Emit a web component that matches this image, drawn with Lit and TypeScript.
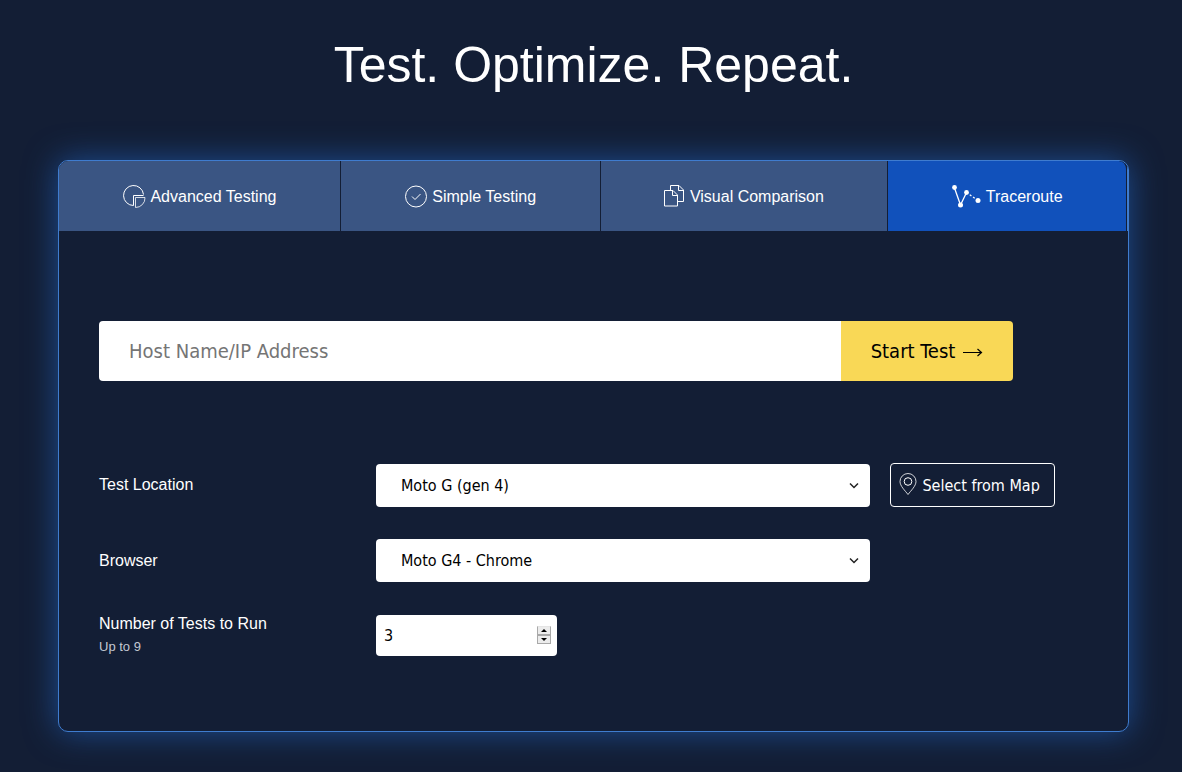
import { LitElement, html, css, svg } from "lit";
import { customElement, state } from "lit/decorators.js";

const icons = {
  advanced: svg`<svg class="icon" width="24" height="24" viewBox="0 0 24 24" aria-hidden="true">
    <path d="M21.5 9.5A10 10 0 1 0 11.5 20.5V10.5H21.5"/>
    <path d="M13.500 12.5H23A9.500 9.500 0 0 1 13.500 22.500Z" opacity=".8"/></svg>`,
  simple: svg`<svg class="icon" width="24" height="24" viewBox="0 0 24 24" aria-hidden="true">
    <circle cx="12" cy="11.500" r="10.5"/><path d="M8 11.500l3 3 5.5-5.5"/></svg>`,
  visual: svg`<svg class="icon" width="22" height="24" viewBox="0 0 22 24" aria-hidden="true">
    <path d="M6.500 5.500V.5H15L19.500 5V16.500H14"/><path d="M14.500 .5V5.500H19.500"/>
    <path d="M.5 5.500H9L13.500 10V21H.5Z"/><path d="M8.500 5.500V10.500H13.500"/></svg>`,
  trace: svg`<svg class="icon" width="30" height="24" viewBox="0 0 30 24" aria-hidden="true">
    <path d="M2.500 3L8.500 20L14.500 7.500" stroke-width="1.300"/><path d="M14.500 7.500L26 15.500" stroke-dasharray="2 2" stroke-width="1.300"/>
    <g fill="#fff" stroke="none"><circle cx="2.500" cy="2.500" r="2.400"/><circle cx="8.500" cy="20" r="2.500"/>
    <circle cx="14.500" cy="7.500" r="2.400"/><circle cx="26" cy="15.500" r="2.500"/></g></svg>`,
};

@customElement("app-root")
export class AppRoot extends LitElement {
  @state() private runs = 3;

  static styles = css`
    :host {
      display: block;
      min-height: 100vh;
      box-sizing: border-box;
      padding: 33px 53px 40px 58px;
      background: #131e35;
      color: #fff;
      font: 16px/20px "Liberation Sans", Arial, sans-serif;
    }
    * { box-sizing: border-box; }
    h1 {
      margin: 0 0 63px;
      font-size: 50px;
      line-height: 64px;
      font-weight: 400;
      text-align: center;
    }
    .card {
      border: 1px solid #3f7ccf;
      border-radius: 10px;
      box-shadow: 0 0 32px rgba(32, 92, 176, 0.75);
      background: #131e35;
      overflow: hidden;
    }
    .tabs { display: flex; border-right: 1px solid #3f7ccf; }
    .tab {
      flex: 1 1 auto;
      display: flex;
      align-items: center;
      justify-content: center;
      gap: 4px;
      height: 70px;
      padding-top: 1px;
      border-right: 1px solid #131e35;
      background: #3a5583;
      color: #fff;
      text-decoration: none;
    }
    .tab:last-child { border-top-right-radius: 8px; }
    .tab.current { background: #1151bb; }
    .icon { flex: none; fill: none; stroke: #fff; stroke-width: 1; }
    form { padding: 90px 40px 74px; }
    input, select, button {
      font-family: "DejaVu Sans Condensed", Tahoma, sans-serif;
      border: 0;
      margin: 0;
    }
    .host { display: flex; max-width: 914px; height: 60px; margin-bottom: 82px; }
    .host input {
      flex: 1;
      min-width: 0;
      padding: 0 30px;
      border-radius: 4px 0 0 4px;
      background: #fff;
      font-size: 20px;
    }
    .host input::placeholder { color: #757575; opacity: 1; }
    .start {
      display: flex;
      align-items: center;
      justify-content: center;
      gap: 8px;
      width: 172px;
      padding: 0;
      border-radius: 0 4px 4px 0;
      background: #f9d856;
      color: #000;
      font-size: 20px;
    }
    .fields {
      display: grid;
      grid-template-columns: 28% 50% auto;
      row-gap: 32px;
      align-items: center;
      justify-content: start;
    }
    .fields > label { grid-column: 1; }
    .pick { grid-column: 2; position: relative; }
    .pick select {
      display: block;
      width: 100%;
      height: 43px;
      padding: 0 32px 0 25px;
      border-radius: 4px;
      appearance: none;
      background: #fff;
      color: #000;
      font-size: 16px;
    }
    .chevron {
      position: absolute;
      right: 11px;
      top: 18px;
      fill: none;
      stroke: #222;
      stroke-width: 1.5;
      pointer-events: none;
    }
    .map {
      display: flex;
      align-items: center;
      gap: 4px;
      height: 44px;
      margin-left: 20px;
      padding: 0 14px 0 8px;
      border: 1px solid #fff;
      border-radius: 4px;
      background: none;
      color: #fff;
      font-size: 16px;
      white-space: nowrap;
    }
    .hint { display: block; margin-top: 3px; font-size: 13px; color: #c3c8d2; }
    .count { grid-column: 2; position: relative; width: 181px; }
    .count input {
      display: block;
      width: 100%;
      height: 41px;
      padding: 0 32px 0 8px;
      border-radius: 4px;
      appearance: textfield;
      background: #fff;
      color: #000;
      font-size: 16px;
    }
    .count input::-webkit-inner-spin-button { appearance: none; margin: 0; }
    .spin {
      position: absolute;
      right: 6px;
      top: 11px;
      display: flex;
      flex-direction: column;
      width: 14px;
    }
    .spin button {
      display: flex;
      align-items: center;
      justify-content: center;
      height: 9px;
      padding: 0;
      border: 1px solid #a9a9a9;
      background: #ececec;
    }
    .spin button:first-child { border-top-color: #e4e4e4; }
  `;

  private step(by: number) {
    this.runs = Math.min(9, Math.max(1, this.runs + by));
  }

  private chevron() {
    return html`<svg class="chevron" width="10" height="8" viewBox="0 0 10 8" aria-hidden="true"><path d="M1 1.500l4 4 4-4"/></svg>`;
  }

  render() {
    return html`
      <h1>Test. Optimize. Repeat.</h1>
      <main class="card">
        <nav class="tabs">
          <a class="tab" href="#advanced">${icons.advanced}Advanced Testing</a>
          <a class="tab" href="#simple">${icons.simple}Simple Testing</a>
          <a class="tab" href="#visual">${icons.visual}Visual Comparison</a>
          <a class="tab current" href="#traceroute" aria-current="page">${icons.trace}Traceroute</a>
        </nav>
        <form @submit=${(e: Event) => e.preventDefault()}>
          <div class="host">
            <input type="text" placeholder="Host Name/IP Address" aria-label="Host Name/IP Address" />
            <button class="start" type="submit">Start Test<svg width="20" height="12" viewBox="0 0 20 12" fill="none" stroke="#000" stroke-width="1.200" aria-hidden="true"><path d="M0 7.500H18.500M14.500 4L18.500 7.500L14.500 11"/></svg></button>
          </div>
          <div class="fields">
            <label for="location">Test Location</label>
            <div class="pick">
              <select id="location"><option>Moto G (gen 4)</option></select>
              ${this.chevron()}
            </div>
            <button class="map" type="button">
              <svg class="icon" width="19" height="24" viewBox="0 0 19 24" aria-hidden="true">
                <path d="M9 21.500C6 17.500 1 13 1 8.500A8 8 0 0 1 17 8.500C17 13 12 17.500 9 21.500Z" opacity=".8"/>
                <circle cx="9" cy="8.500" r="3.800"/></svg>Select from Map
            </button>
            <label for="browser">Browser</label>
            <div class="pick">
              <select id="browser"><option>Moto G4 - Chrome</option></select>
              ${this.chevron()}
            </div>
            <label for="runs">Number of Tests to Run<small class="hint">Up to 9</small></label>
            <div class="count">
              <input id="runs" type="number" min="1" max="9" .value=${String(this.runs)}
                @change=${(e: Event) => (this.runs = Number((e.target as HTMLInputElement).value))} />
              <div class="spin">
                <button type="button" aria-label="More tests" @click=${() => this.step(1)}>
                  <svg width="6" height="3" viewBox="0 0 6 3" aria-hidden="true"><path d="M0 3L3 0L6 3Z"/></svg></button>
                <button type="button" aria-label="Fewer tests" @click=${() => this.step(-1)}>
                  <svg width="6" height="3" viewBox="0 0 6 3" aria-hidden="true"><path d="M0 0L3 3L6 0Z"/></svg></button>
              </div>
            </div>
          </div>
        </form>
      </main>
    `;
  }
}
